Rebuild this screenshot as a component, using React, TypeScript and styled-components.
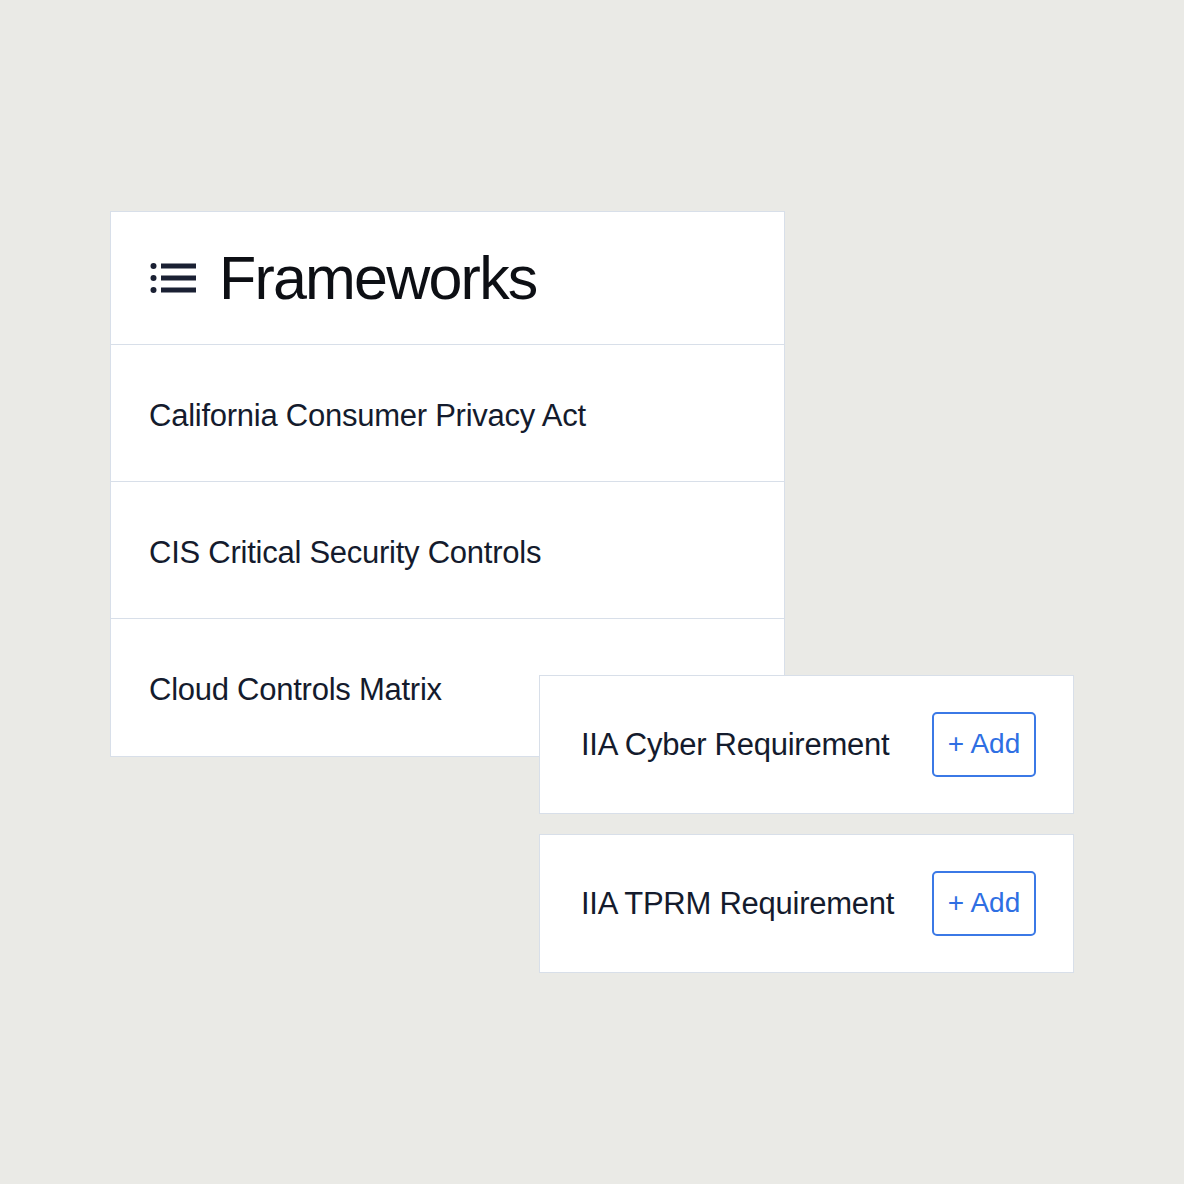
import React from 'react';
import styled, { createGlobalStyle } from 'styled-components';

const GlobalStyle = createGlobalStyle`
  html, body {
    margin: 0;
    padding: 0;
    background: #eaeae6;
  }
  body {
    font-family: 'Liberation Sans', Arial, sans-serif;
    color: #141b2d;
  }
`;

const Page = styled.div`
  width: 1184px;
  height: 1184px;
  box-sizing: border-box;
  padding: 211px 0 0 110px;
`;

const Stage = styled.div`
  position: relative;
  width: 675px;
`;

const Panel = styled.div`
  width: 675px;
  box-sizing: border-box;
  background: #fff;
  border: 1px solid #d8dfe9;
`;

const Header = styled.div`
  height: 132px;
  display: flex;
  align-items: center;
  gap: 21px;
  padding-left: 39px;
  border-bottom: 1px solid #d8dfe9;
`;

const Title = styled.h1`
  margin: 0;
  font-size: 61px;
  font-weight: 400;
  letter-spacing: -1.8px;
  color: #0d0f14;
`;

const Row = styled.div<{ $last?: boolean }>`
  height: 137px;
  display: flex;
  align-items: center;
  padding: 5px 0 0 38px;
  box-sizing: border-box;
  font-size: 31px;
  letter-spacing: -0.25px;
  border-bottom: ${(p) => (p.$last ? 'none' : '1px solid #d8dfe9')};
`;

const Floating = styled.div`
  position: absolute;
  left: 429px;
  top: 464px;
  display: flex;
  flex-direction: column;
  gap: 20px;
`;

const Card = styled.div`
  width: 535px;
  height: 139px;
  box-sizing: border-box;
  background: #fff;
  border: 1px solid #d8dfe9;
  display: flex;
  align-items: center;
  justify-content: space-between;
  padding: 0 37px 0 41px;
  font-size: 31px;
  letter-spacing: -0.25px;
`;

const AddButton = styled.button`
  width: 104px;
  height: 65px;
  box-sizing: border-box;
  border: 2px solid #3b79e6;
  border-radius: 5px;
  background: #fff;
  color: #2f6fe3;
  font-family: 'Liberation Sans', Arial, sans-serif;
  font-size: 28px;
  padding: 0 0 2px;
  letter-spacing: 0;
`;

const ListIcon = () => (
  <svg width="48" height="32" viewBox="0 0 48 32">
    <circle cx="3.5" cy="4" r="3" fill="#1a2033" />
    <circle cx="3.5" cy="16" r="3" fill="#1a2033" />
    <circle cx="3.5" cy="28" r="3" fill="#1a2033" />
    <rect x="11" y="1.5" width="35" height="5" fill="#1a2033" />
    <rect x="11" y="13.5" width="35" height="5" fill="#1a2033" />
    <rect x="11" y="25.5" width="35" height="5" fill="#1a2033" />
  </svg>
);

const frameworks = [
  'California Consumer Privacy Act',
  'CIS Critical Security Controls',
  'Cloud Controls Matrix',
];

const requirements = ['IIA Cyber Requirement', 'IIA TPRM Requirement'];

export default function App() {
  return (
    <>
      <GlobalStyle />
      <Page>
        <Stage>
          <Panel>
            <Header>
              <ListIcon />
              <Title>Frameworks</Title>
            </Header>
            {frameworks.map((f, i) => (
              <Row key={f} $last={i === frameworks.length - 1}>
                {f}
              </Row>
            ))}
          </Panel>
          <Floating>
            {requirements.map((r) => (
              <Card key={r}>
                <span>{r}</span>
                <AddButton>+ Add</AddButton>
              </Card>
            ))}
          </Floating>
        </Stage>
      </Page>
    </>
  );
}
